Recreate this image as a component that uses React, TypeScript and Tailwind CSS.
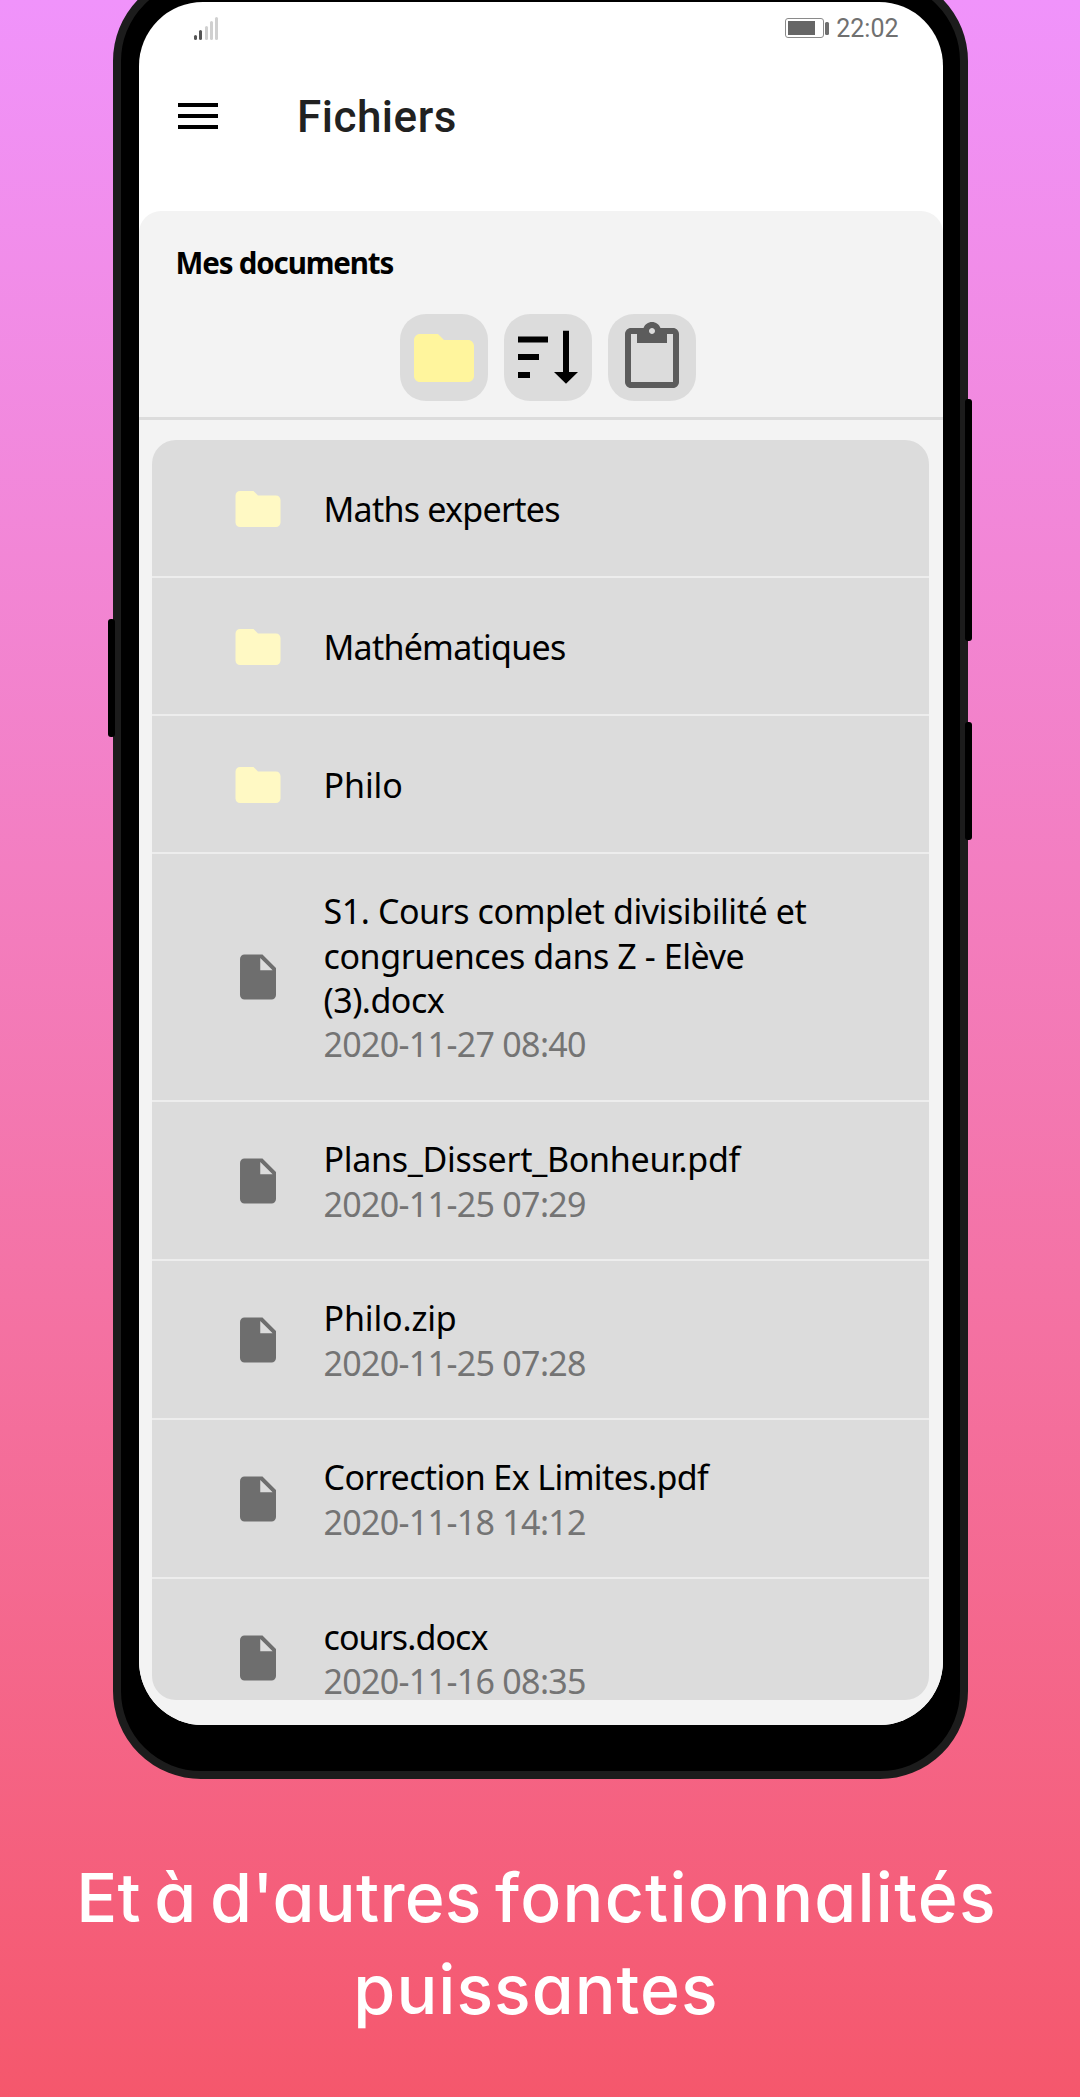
type Line = { text: string; spacing: string };
type Entry = { kind: "folder" | "file"; height: string; lines: Line[]; date?: string };

const entries: Entry[] = [
  { kind: "folder", height: "h-[138px]", lines: [{ text: "Maths expertes", spacing: "tracking-[-0.75px]" }] },
  { kind: "folder", height: "h-[138px]", lines: [{ text: "Mathématiques", spacing: "tracking-[-0.75px]" }] },
  { kind: "folder", height: "h-[138px]", lines: [{ text: "Philo", spacing: "tracking-[-0.1px]" }] },
  {
    kind: "file",
    height: "h-[248px]",
    lines: [
      { text: "S1. Cours complet divisibilité et", spacing: "tracking-[-0.42px]" },
      { text: "congruences dans Z - Elève", spacing: "tracking-[-0.41px]" },
      { text: "(3).docx", spacing: "tracking-[-0.5px]" },
    ],
    date: "2020-11-27 08:40",
  },
  { kind: "file", height: "h-[159px]", lines: [{ text: "Plans_Dissert_Bonheur.pdf", spacing: "tracking-[-0.29px]" }], date: "2020-11-25 07:29" },
  { kind: "file", height: "h-[159px]", lines: [{ text: "Philo.zip", spacing: "tracking-[-0.15px]" }], date: "2020-11-25 07:28" },
  { kind: "file", height: "h-[159px]", lines: [{ text: "Correction Ex Limites.pdf", spacing: "tracking-[-0.6px]" }], date: "2020-11-18 14:12" },
  { kind: "file", height: "h-[121px]", lines: [{ text: "cours.docx", spacing: "tracking-[-0.9px]" }], date: "2020-11-16 08:35" },
];

function FolderIcon({ className }: { className: string }) {
  return (
    <svg viewBox="0 0 24 24" fill="currentColor" className={className}>
      <path d="M10 4H4c-1.1 0-1.99.9-1.99 2L2 18c0 1.1.9 2 2 2h16c1.1 0 2-.9 2-2V8c0-1.1-.9-2-2-2h-8l-2-2z" />
    </svg>
  );
}

function FileIcon({ className }: { className: string }) {
  return (
    <svg viewBox="0 0 24 24" fill="currentColor" className={className}>
      <path d="M6 2c-1.1 0-1.99.9-1.99 2L4 20c0 1.1.89 2 1.99 2H18c1.1 0 2-.9 2-2V8l-6-6H6zm7 7V3.5L18.5 9H13z" />
    </svg>
  );
}

function SortIcon() {
  return (
    <svg viewBox="0 0 72 72" className="size-[72px]" fill="#000">
      <path d="M6 14.5h30v6H6zM6 32h21v6H6zM6 50h12v6H6zM51 8.8h6V50h9L54 61.7 42 50h9z" />
    </svg>
  );
}

function ClipboardIcon() {
  return (
    <svg viewBox="0 0 24 24" className="size-[72px]" fill="#5c5c5c">
      <path d="M19 2h-4.18C14.4.84 13.3 0 12 0c-1.3 0-2.4.84-2.82 2H5c-1.1 0-2 .9-2 2v16c0 1.1.9 2 2 2h14c1.1 0 2-.9 2-2V4c0-1.1-.9-2-2-2zm-7 0c.55 0 1 .45 1 1s-.45 1-1 1-1-.45-1-1 .45-1 1-1zm7 18H5V4h2v3h10V4h2v16z" />
    </svg>
  );
}

function StatusBar() {
  return (
    <div className="flex h-[48px] items-start justify-between pl-[55px] pr-[44.5px] pt-[13px]">
      <div className="flex h-[24.5px] items-end gap-[2.3px]">
        <span className="h-[5px] w-[3px] rounded-full bg-[#555]" />
        <span className="h-[10px] w-[3px] rounded-full bg-[#555]" />
        <span className="h-[14px] w-[3px] rounded-full bg-[#d0d0d0]" />
        <span className="h-[19px] w-[3px] rounded-full bg-[#d0d0d0]" />
        <span className="h-[23px] w-[3px] rounded-full bg-[#d0d0d0]" />
      </div>
      <div className="flex items-start">
        <div className="mt-[2.5px] h-[20.5px] w-[39px] rounded-[3px] border border-[#8a8a8a] p-[2px]">
          <div className="h-full w-[27px] bg-[#666]" />
        </div>
        <div className="ml-px mt-[6.5px] h-[13px] w-[4px] rounded-[1.5px] bg-[#6e6e6e]" />
        <span className="ml-[7px] mt-px text-[25px] leading-[25px] text-[#707070] font-['Roboto',sans-serif]">22:02</span>
      </div>
    </div>
  );
}

function Row({ entry }: { entry: Entry }) {
  return (
    <li
      className={`group flex shrink-0 items-center border-b-2 border-[#ededed] pl-[79px] last:items-start last:border-b-0 ${entry.height}`}
    >
      {entry.kind === "folder" ? (
        <FolderIcon className="mt-px size-[54px] shrink-0 text-[#fff9c4]" />
      ) : (
        <FileIcon className="size-[54px] shrink-0 text-[#6e6e6e] group-last:mt-[51.5px]" />
      )}
      <div className="ml-[39px] mt-[2px] whitespace-nowrap text-[34px] leading-[44.33px] text-black group-last:mt-[35.5px]">
        {entry.lines.map((l) => (
          <div key={l.text} className={l.spacing}>
            {l.text}
          </div>
        ))}
        {entry.date && <div className="tracking-[-0.68px] text-[#747474]">{entry.date}</div>}
      </div>
    </li>
  );
}

export default function App() {
  return (
    <div className="relative h-[2097px] w-[1080px] overflow-hidden bg-linear-to-b from-[#f093fb] to-[#f5576c] font-['Noto_Sans',sans-serif] [font-variant-ligatures:none]">
      <div className="absolute left-[113px] top-[-27px] h-[1806px] w-[855px] rounded-[88px] border-[8px] border-[#1c1c1c] bg-black" />
      <div className="absolute left-[108px] top-[619px] h-[118px] w-[7px] rounded-[3px] bg-black" />
      <div className="absolute left-[965px] top-[399px] h-[242px] w-[7px] rounded-[3px] bg-black" />
      <div className="absolute left-[965px] top-[722px] h-[118px] w-[7px] rounded-[3px] bg-black" />

      <div className="relative ml-[139px] mt-[2px] flex h-[1723px] w-[804px] flex-col overflow-hidden rounded-[64px] bg-white">
        <StatusBar />
        <header className="flex h-[161px] items-start">
          <div className="ml-[39px] mt-[52.5px] flex w-[40px] flex-col gap-[6.5px]">
            <span className="h-[4.5px] bg-black" />
            <span className="h-[4.5px] bg-black" />
            <span className="h-[4.5px] bg-black" />
          </div>
          <h1 className="ml-[79px] mt-[41px] text-[44px] font-medium leading-[52px] tracking-[0.5px] text-[#212121] font-['Roboto',sans-serif]">Fichiers</h1>
        </header>
        <main className="flex flex-1 flex-col rounded-t-[22px] bg-[#f3f3f3]">
          <h2 className="ml-[36.5px] mt-[32px] text-[29.5px] font-bold leading-[40px] tracking-[-1.15px] text-black">Mes documents</h2>
          <div className="ml-[261px] mt-[31px] flex gap-[16px]">
            <button className="flex h-[87px] w-[88px] items-start justify-center rounded-[26px] bg-[#dcdcdc] pt-[8px]">
              <FolderIcon className="size-[72px] text-[#fff59d]" />
            </button>
            <button className="flex h-[87px] w-[88px] items-start justify-center rounded-[26px] bg-[#dcdcdc] pt-[8px]">
              <SortIcon />
            </button>
            <button className="flex h-[87px] w-[88px] items-start justify-center rounded-[26px] bg-[#dcdcdc] pt-[8px]">
              <ClipboardIcon />
            </button>
          </div>
          <div className="mt-[16px] h-[3px] bg-[#dcdcdc]" />
          <ul className="ml-[12.5px] mt-[20px] flex h-[1260px] w-[777.5px] flex-col rounded-[24px] bg-[#dcdcdc]">
            {entries.map((e) => (
              <Row key={e.lines[0].text} entry={e} />
            ))}
          </ul>
        </main>
      </div>

      <p className="mt-[126px] text-center text-[68px] font-medium leading-[92px] text-white font-['Inter',sans-serif] [font-feature-settings:'cv11']">
        <span className="mr-[7px] block whitespace-nowrap tracking-[0.25px] [word-spacing:-5px]">
          Et à d'autres <span className="tracking-[1.2px]">fonctionnalités</span>
        </span>
        <span className="mr-[8px] block tracking-[1px]">puissantes</span>
      </p>
    </div>
  );
}
